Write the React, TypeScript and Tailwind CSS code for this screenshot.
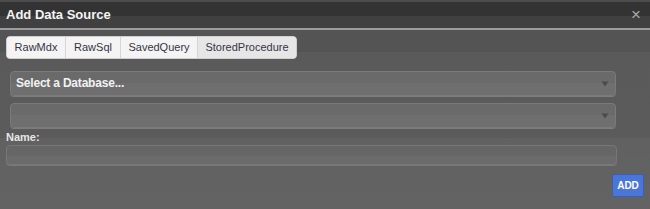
import React, { useState } from 'react';

const TABS = ['RawMdx', 'RawSql', 'SavedQuery', 'StoredProcedure'];

const Arrow: React.FC = () => (
    <svg width="8" height="6" viewBox="0 0 8 6" className="absolute right-[6px] top-[9px]">
        <path d="M0.5 0.5 L7.5 0.5 L4 5.5 Z" fill="#4e4a48" />
    </svg>
);

const SelectBox: React.FC<{ label?: string }> = ({ label }) => (
    <div className="relative h-[25px] w-[606px] rounded-[4px] border border-[#7a7a7a] bg-[linear-gradient(#6a6a6a_0%,#6a6a6a_50%,#6f6f6f_50%,#6f6f6f_100%)] shadow-[0_1px_0_#7c7c7c]">
        {label && (
            <span className="absolute left-[5px] top-[4px] text-[12px] font-bold leading-[14px] tracking-[-0.2px] text-[#f2f2f2]">
                {label}
            </span>
        )}
        <Arrow />
    </div>
);

const App: React.FC = () => {
    const [active, setActive] = useState('StoredProcedure');

    return (
        <div className="w-[650px] h-[209px] flex flex-col overflow-hidden font-['Liberation_Sans',Arial,sans-serif]">
            {/* HEADER */}
            <div className="h-[2px] bg-[#4c4c4c]" />
            <div className="relative h-[26px] bg-[linear-gradient(#333333_0%,#333333_52%,#404040_52%,#404040_100%)]">
                <span className="absolute left-[6px] top-[5px] text-[13px] font-bold leading-[16px] text-[#f4f4f4]">
                    Add Data Source
                </span>
                <span className="absolute right-[9px] top-[4px] text-[17px] leading-[17px] text-[#a8a8a8]">×</span>
            </div>
            <div className="h-[2px] bg-[#9c9c9c]" />

            {/* BODY */}
            <div className="flex-1 flex flex-col bg-[linear-gradient(#545454_0px,#545454_22px,#5a5a5a_22px,#5b5b5b_108px,#616161_108px,#636363_100%)]">
                <div className="pl-[6px] pt-[4px]">
                    <div className="inline-flex h-[23px] rounded-[4px] border border-[#cfcfcf] bg-[#f3f3f3] overflow-hidden">
                        {TABS.map((t, i) => (
                            <button
                                key={t}
                                onClick={() => setActive(t)}
                                className={`h-full text-[11px] leading-[21px] text-[#353545] ${i > 0 ? 'border-l border-[#d6d6d6]' : ''} ${active === t ? 'bg-[#e6e6e6]' : 'bg-[#f4f4f4]'} ${i === 0 ? 'w-[58px]' : i === 1 ? 'w-[55px]' : i === 2 ? 'w-[77px]' : 'w-[99px]'}`}
                            >
                                {t}
                            </button>
                        ))}
                    </div>
                </div>

                <div className="pl-[10px] pt-[12px] flex flex-col gap-[7px]">
                    <SelectBox label="Select a Database..." />
                    <SelectBox />
                </div>

                <div className="pl-[6px] pt-[3px] text-[11px] font-bold leading-[13px] text-[#e6e6e6]">Name:</div>
                <div className="pl-[6px] pt-[1px]">
                    <div className="h-[20px] w-[611px] rounded-[4px] border border-[#777777] bg-[linear-gradient(#666666_0%,#666666_55%,#6b6b6b_55%,#6b6b6b_100%)] shadow-[0_1px_0_#7a7a7a]" />
                </div>

                <div className="flex justify-end pr-[6px] pt-[9px]">
                    <button className="h-[23px] w-[32px] rounded-[2px] border border-[#3b5fb8] bg-[#4a76d8] text-[10px] font-bold text-white">
                        ADD
                    </button>
                </div>
            </div>
        </div>
    );
};

export default App;
